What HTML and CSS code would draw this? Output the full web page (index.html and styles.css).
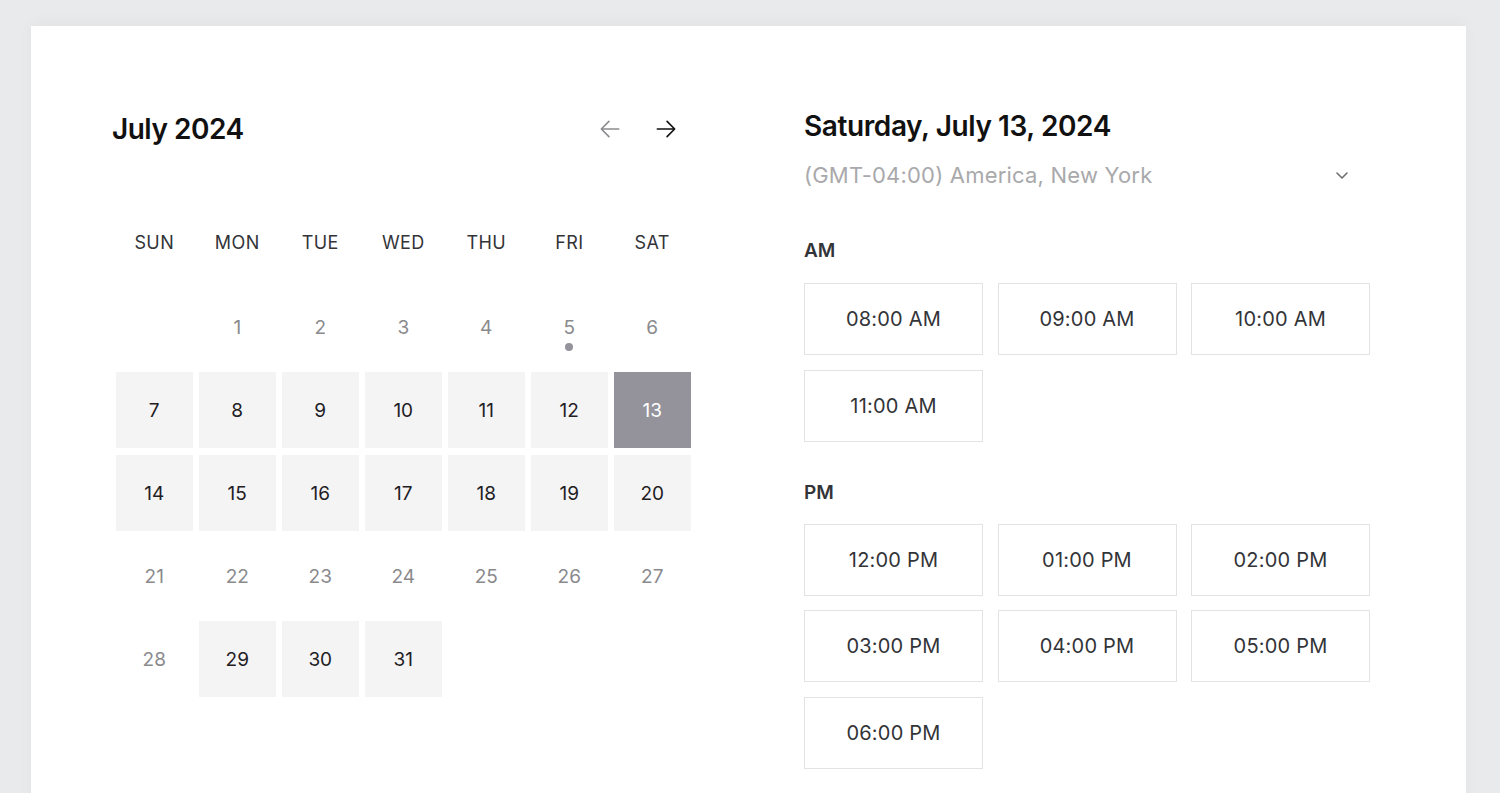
FILE: index.html
```html
<!DOCTYPE html>
<html lang="en">
<head>
    <meta charset="UTF-8">
    <meta name="viewport" content="width=device-width, initial-scale=1.0">
    <title>Book a Time</title>
    <link rel="stylesheet" href="styles.css">
</head>
<body>
    <main class="card">
        <section class="calendar">
            <div class="cal-head">
                <h2 class="month">July 2024</h2>
                <div class="cal-nav">
                    <button class="nav-btn prev" aria-label="Previous month">
                        <svg width="26" height="26" viewBox="0 0 24 24" fill="none" stroke="currentColor" stroke-width="1.5" stroke-linecap="round" stroke-linejoin="round"><path d="M20 12H4M11 5l-7 7 7 7"/></svg>
                    </button>
                    <button class="nav-btn next" aria-label="Next month">
                        <svg width="26" height="26" viewBox="0 0 24 24" fill="none" stroke="currentColor" stroke-width="1.5" stroke-linecap="round" stroke-linejoin="round"><path d="M4 12h16M13 5l7 7-7 7"/></svg>
                    </button>
                </div>
            </div>

            <div class="weekdays">
                <span>SUN</span><span>MON</span><span>TUE</span><span>WED</span><span>THU</span><span>FRI</span><span>SAT</span>
            </div>

            <div class="days">
                <span class="day empty"></span>
                <span class="day off">1</span>
                <span class="day off">2</span>
                <span class="day off">3</span>
                <span class="day off">4</span>
                <span class="day off today">5</span>
                <span class="day off">6</span>

                <span class="day open">7</span>
                <span class="day open">8</span>
                <span class="day open">9</span>
                <span class="day open">10</span>
                <span class="day open">11</span>
                <span class="day open">12</span>
                <span class="day open selected">13</span>

                <span class="day open">14</span>
                <span class="day open">15</span>
                <span class="day open">16</span>
                <span class="day open">17</span>
                <span class="day open">18</span>
                <span class="day open">19</span>
                <span class="day open">20</span>

                <span class="day off">21</span>
                <span class="day off">22</span>
                <span class="day off">23</span>
                <span class="day off">24</span>
                <span class="day off">25</span>
                <span class="day off">26</span>
                <span class="day off">27</span>

                <span class="day off">28</span>
                <span class="day open">29</span>
                <span class="day open">30</span>
                <span class="day open">31</span>
            </div>
        </section>

        <section class="slots">
            <h2 class="date-title">Saturday, July 13, 2024</h2>
            <div class="timezone">
                <span>(GMT-04:00) America, New York</span>
                <svg width="16" height="16" viewBox="0 0 16 16" fill="none" stroke="currentColor" stroke-width="1.6" stroke-linecap="round" stroke-linejoin="round"><path d="M3 6l5 5 5-5"/></svg>
            </div>

            <h3 class="period">AM</h3>
            <div class="slot-grid">
                <button class="slot">08:00 AM</button>
                <button class="slot">09:00 AM</button>
                <button class="slot">10:00 AM</button>
                <button class="slot">11:00 AM</button>
            </div>

            <h3 class="period pm">PM</h3>
            <div class="slot-grid">
                <button class="slot">12:00 PM</button>
                <button class="slot">01:00 PM</button>
                <button class="slot">02:00 PM</button>
                <button class="slot">03:00 PM</button>
                <button class="slot">04:00 PM</button>
                <button class="slot">05:00 PM</button>
                <button class="slot">06:00 PM</button>
            </div>
        </section>
    </main>
</body>
</html>
```

FILE: styles.css
```css
:root {
    --page-bg: #e9eaec;
    --card-bg: #ffffff;
    --text-dark: #1f2024;
    --text-body: #333438;
    --text-muted: #8a8a8d;
    --text-faint: #a9a9ab;
    --cell-bg: #f4f4f5;
    --selected-bg: #94939c;
    --border: #e3e3e5;
}

* {
    margin: 0;
    padding: 0;
    box-sizing: border-box;
}

html, body {
    height: 100%;
    overflow: hidden;
}

body {
    background-color: var(--page-bg);
    font-family: Inter, Lato, sans-serif;
    color: var(--text-body);
    padding: 26px 34px 0 31px;
}

.card {
    background-color: var(--card-bg);
    min-height: 900px;
    display: flex;
    gap: 113px;
    padding: 84px 0 0 81px;
    box-shadow: 0 -4px 14px rgba(0, 0, 0, 0.03);
}

/* calendar column */

.calendar {
    width: 579px;
}

.cal-head {
    display: flex;
    align-items: center;
    justify-content: space-between;
    height: 38px;
    padding-right: 12px;
}

.month {
    font-size: 28px;
    font-weight: 600;
    color: #111;
    letter-spacing: -0.5px;
}

.cal-nav {
    display: flex;
    gap: 30px;
}

.nav-btn {
    background: none;
    border: none;
    cursor: pointer;
    display: flex;
}

.nav-btn.prev { color: #8c8c8e; }
.nav-btn.next { color: #111; }

.weekdays,
.days {
    display: grid;
    grid-template-columns: repeat(7, 76.5px);
    column-gap: 6.5px;
    margin-left: 4px;
}

.weekdays {
    margin-top: 84px;
}

.weekdays span {
    text-align: center;
    font-size: 18px;
    letter-spacing: 0.4px;
    color: var(--text-body);
}

.days {
    margin-top: 36px;
    grid-auto-rows: 76px;
    row-gap: 7px;
}

.day {
    display: flex;
    align-items: center;
    justify-content: center;
    font-size: 19px;
    position: relative;
}

.day.off {
    color: var(--text-muted);
}

.day.open {
    background-color: var(--cell-bg);
    color: var(--text-dark);
    cursor: pointer;
}

.day.selected {
    background-color: var(--selected-bg);
    color: #fff;
}

.day.today::after {
    content: '';
    position: absolute;
    width: 8px;
    height: 8px;
    border-radius: 50%;
    background-color: var(--selected-bg);
    left: 50%;
    top: 54px;
    transform: translateX(-50%);
}

/* time slot column */

.slots {
    width: 567px;
}

.date-title {
    font-size: 28px;
    font-weight: 600;
    color: #111;
    margin-top: -2px;
    line-height: 36px;
    letter-spacing: -0.4px;
}

.timezone {
    display: flex;
    align-items: center;
    justify-content: space-between;
    width: 546px;
    margin-top: 18px;
    font-size: 22px;
    letter-spacing: 0.2px;
    color: var(--text-faint);
}

.timezone svg {
    color: #6f6f72;
}

.period {
    font-size: 19px;
    font-weight: 600;
    color: var(--text-body);
    margin-top: 51px;
    margin-bottom: 21px;
}

.period.pm {
    margin-top: 39px;
    margin-bottom: 20px;
}

.slot-grid {
    display: grid;
    grid-template-columns: repeat(3, 179px);
    column-gap: 14.5px;
    row-gap: 14.5px;
}

.slot {
    height: 72px;
    background: #fff;
    border: 1.5px solid var(--border);
    font-family: inherit;
    font-size: 20px;
    letter-spacing: 0.2px;
    color: var(--text-body);
    cursor: pointer;
}
```
